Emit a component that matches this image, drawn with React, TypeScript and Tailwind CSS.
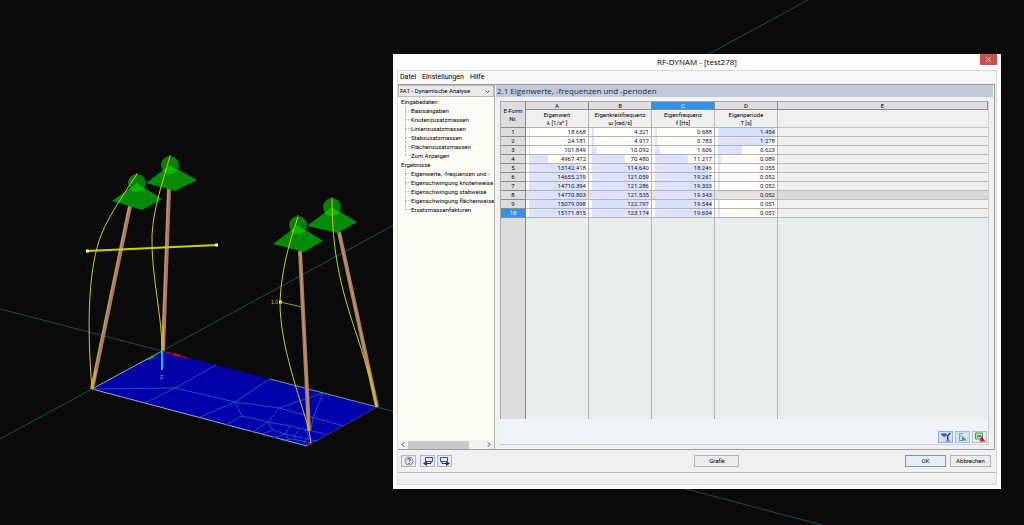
import type { ReactNode } from "react";

const inputData = [
  "Basisangaben",
  "Knotenzusatzmassen",
  "Linienzusatzmassen",
  "Stabzusatzmassen",
  "Flächenzusatzmassen",
  "Zum Anzeigen",
];

const results = [
  "Eigenwerte, -frequenzen und -",
  "Eigenschwingung knotenweise",
  "Eigenschwingung stabweise",
  "Eigenschwingung flächenweise",
  "Ersatzmassenfaktoren",
];

const columns = [
  { letter: "A", name: "Eigenwert", unit: "λ [1/s² ]" },
  { letter: "B", name: "Eigenkreisfrequenz", unit: "ω [rad/s]" },
  { letter: "C", name: "Eigenfrequenz", unit: "f [Hz]" },
  { letter: "D", name: "Eigenperiode", unit: "T [s]" },
];

const rows = [
  ["18.668", "4.321", "0.688", "1.454"],
  ["24.181", "4.917", "0.783", "1.278"],
  ["101.849", "10.092", "1.606", "0.623"],
  ["4967.472", "70.480", "11.217", "0.089"],
  ["13142.418", "114.640", "18.246", "0.055"],
  ["14655.219", "121.059", "19.267", "0.052"],
  ["14710.394", "121.286", "19.303", "0.052"],
  ["14770.803", "121.535", "19.343", "0.052"],
  ["15079.098", "122.797", "19.544", "0.051"],
  ["15171.815", "123.174", "19.604", "0.051"],
];

const maxima = columns.map((_, c) => Math.max(...rows.map((r) => Number(r[c]))));
const SELECTED_ROW = 7;
const CURSOR_ROW = 9;
const CURSOR_COLUMN = 2;

function Support({ x, y, base }: { x: number; y: number; base: string }) {
  return (
    <g>
      <circle cx={x} cy={y} r="9" fill="#087f08" />
      <polygon points={base} fill="#078a07" />
      <path d={`M${x} ${y} l-8 6 q8 6 16 0 z`} fill="#08b808" />
      <circle cx={x} cy={y - 9} r="1" fill="#c03a10" />
    </g>
  );
}

function Model() {
  return (
    <svg
      className="absolute inset-0 h-full w-full"
      viewBox="0 0 1024 525"
      preserveAspectRatio="xMinYMin slice"
      role="img"
      aria-label="Modell"
    >
      <defs>
        <linearGradient id="slab" x1="0" y1="0" x2="0" y2="1">
          <stop offset="0" stopColor="#0202a4" />
          <stop offset="1" stopColor="#0000b0" />
        </linearGradient>
      </defs>

      {/* construction axes */}
      <g stroke="#125350" strokeWidth="1">
        <path d="M0 309 L162 351" />
        <path d="M377 407 L822 525" />
        <path d="M0 439 L92 389" />
        <path d="M162 351 L808 0" />
      </g>

      {/* slab with FE mesh */}
      <polygon points="162,351 377,407 307,446 92,389" fill="url(#slab)" />
      <path d="M162 351 L92 389 L307 446" fill="none" stroke="#a9a6b8" strokeWidth="1" />
      <path d="M307 446 L377 407" fill="none" stroke="#4a2a90" strokeWidth="1" />
      <path d="M270 379 L377 407" fill="none" stroke="#7f8fb0" strokeWidth="1" />
      <g fill="none" stroke="#1557b8" strokeWidth="1">
        <path d="M92 389 L175 388 L235 402 L279 408 L344 426" />
        <path d="M216 365 L175 388 L145 403" />
        <path d="M270 379 L235 402 L200 417" />
        <path d="M235 402 L242 416 L226 425" />
        <path d="M242 416 L268 422 L279 408 L323 393 L313 418" />
        <path d="M268 422 L252 432" />
        <path d="M268 422 L290 426 L325 434" />
        <path d="M268 422 L273 430 L262 434" />
        <path d="M273 430 L285 434 L317 441" />
        <path d="M290 426 L285 434 L273 438" />
        <path d="M285 434 L289 439 L282 441" />
        <path d="M300 428 L294 437 L300 444 M305 430 L309 436 L303 445" />
        <path d="M289 439 L297 440 L312 443" />
        <path d="M313 418 L311 430" />
      </g>

      {/* columns */}
      <g strokeLinecap="butt" fill="none">
        <path d="M130 206 L92 389" stroke="#a97c60" strokeWidth="4" />
        <path d="M129 206 L91 389" stroke="#c89a7a" strokeWidth="1" />
        <path d="M169 189 L163 351" stroke="#a97c60" strokeWidth="4" />
        <path d="M168 189 L162 351" stroke="#c89a7a" strokeWidth="1" />
        <path d="M300 251 L309 431" stroke="#a97c60" strokeWidth="4" />
        <path d="M300 251 L309 431" stroke="#c89a7a" strokeWidth="1" />
        <path d="M339 232 L377 407" stroke="#a97c60" strokeWidth="4" />
        <path d="M339 232 L377 407" stroke="#c89a7a" strokeWidth="1" />
        <path d="M96 370 L92 389 M163 325 L163 350 M368 366 L377 407" stroke="#d8a43c" strokeWidth="2" />
        <path d="M309 431 L311 443" stroke="#c9b9c9" strokeWidth="1" />
        <path d="M306 445 l6 -2" stroke="#e02020" strokeWidth="1" />
      </g>

      <Support x={137} y={183} base="137,183 162,199 142,210 112,201" />
      <Support x={170} y={165} base="170,165 197,180 175,191 146,183" />
      <Support x={298} y={225} base="298,225 323,241 304,252 273,244" />
      <Support x={332} y={207} base="332,207 357,222 338,233 307,226" />

      {/* mode shape */}
      <g fill="none" stroke="#c9c935" strokeWidth="1">
        <path d="M137 174 C118 203 105 222 99 241 C88 275 87 330 92 389" />
        <path d="M170 156 C162 185 154 205 152 235 C151 275 162 315 162 350" />
        <path d="M298 217 C288 245 281 275 280 302 C280 345 299 395 309 430" />
        <path d="M332 199 C332 250 340 285 355 330 C364 356 372 385 376 406" />
      </g>
      <path d="M87 251 L217 245" stroke="#cfcf00" strokeWidth="2" />
      <path d="M86 251 h3 M215 245 h3 M279 302 h3" stroke="#ffff66" strokeWidth="3" />
      <path d="M280 302 L302 307" stroke="#9a9a2c" strokeWidth="1" />
      <text x="271" y="304" fill="#c9c935" className="font-['Liberation_Sans'] text-[5px]">1.0</text>

      {/* global axes */}
      <path d="M162 351 L147 360" stroke="#00b030" strokeWidth="1" />
      <path d="M154 356 l-5 3" stroke="#00c030" strokeWidth="2" />
      <path d="M162 351 L187 358" stroke="#d00020" strokeWidth="1" />
      <path d="M174 354 l6 2" stroke="#f00010" strokeWidth="2" />
      <path d="M162 351 V370" stroke="#19b4ee" strokeWidth="2" />
      <text x="160" y="379" fill="#29b8e8" className="font-['Liberation_Sans'] text-[6px]">Z</text>
    </svg>
  );
}

function IconButton({ label, className = "", children }: { label: string; className?: string; children: ReactNode }) {
  return (
    <button
      type="button"
      aria-label={label}
      className={`flex h-3 w-[15px] items-center justify-center border ${className || "border-[#b4b4b8] bg-[#ebebee]"}`}
    >
      <svg width="12" height="10" viewBox="0 0 12 10" fill="none">
        {children}
      </svg>
    </button>
  );
}

function TreeGroup({ title, items }: { title: string; items: string[] }) {
  return (
    <li>
      <span className="block px-[3px]">{title}</span>
      <ul className="ml-[7px]">
        {items.map((item, i) => (
          <li key={item} className="flex h-[9px] items-center">
            <span className="flex h-full w-1.5 shrink-0 flex-col">
              <span className="h-[5px] w-full border-b border-l border-dotted border-[#b5b5ac]" />
              <span className={`flex-1 border-dotted border-[#b5b5ac] ${i < items.length - 1 ? "border-l" : ""}`} />
            </span>
            <a href="#" className="whitespace-nowrap">{item}</a>
          </li>
        ))}
      </ul>
    </li>
  );
}

function Navigator() {
  return (
    <aside className="flex w-[97px] shrink-0 flex-col border-r border-[#b8b8b8] bg-[#fcfcf4]">
      <div className="relative h-3 shrink-0">
        <select
          aria-label="Fall"
          className="h-full w-full appearance-none border border-[#b9b9b9] bg-[#e9e9e9] pl-px text-[6px] leading-none text-black"
        >
          <option>FA1 - Dynamische Analyse</option>
        </select>
        <svg className="pointer-events-none absolute top-1 right-1" width="5" height="5" viewBox="0 0 5 5" fill="none" stroke="#444">
          <path d="M.5 1.500 L2.500 3.500 L4.500 1.500" />
        </svg>
      </div>
      <ul className="flex-1 overflow-hidden leading-[9px]">
        <TreeGroup title="Eingabedaten" items={inputData} />
        <TreeGroup title="Ergebnisse" items={results} />
      </ul>
      <div className="flex h-[9px] items-center bg-[#f1f1ef]">
        <button type="button" aria-label="Nach links" className="flex w-2.5 justify-center">
          <svg width="4" height="5" viewBox="0 0 4 5" fill="none" stroke="#333"><path d="M3 .5 L1 2.5 L3 4.5" /></svg>
        </button>
        <div className="h-2 w-[61px] bg-[#c9c9c9]" />
        <button type="button" aria-label="Nach rechts" className="ml-auto flex w-2.5 justify-center">
          <svg width="4" height="5" viewBox="0 0 4 5" fill="none" stroke="#333"><path d="M1 .5 L3 2.5 L1 4.5" /></svg>
        </button>
      </div>
    </aside>
  );
}

function ResultTable() {
  return (
    <table className="h-full w-full table-fixed border-separate border-spacing-0 border-t border-l border-[#a8a8a8] text-center leading-none">
      <colgroup>
        <col className="w-[25px]" />
        <col className="w-[63px]" />
        <col className="w-[63px]" />
        <col className="w-[63px]" />
        <col className="w-[63px]" />
        <col />
      </colgroup>
      <thead>
        <tr className="h-2">
          <th rowSpan={2} className="border-r border-b border-[#8a8a8a] bg-[#dcdcdc] p-0 font-normal leading-2">
            E-Form
            <br />
            Nr.
          </th>
          {columns.map((col, c) => (
            <th
              key={col.letter}
              className={`border-r border-b border-[#8a8a8a] p-0 font-normal leading-[7px] ${c === CURSOR_COLUMN ? "bg-[#3092e8] text-white" : "bg-[#dedede]"}`}
            >
              {col.letter}
            </th>
          ))}
          <th className="border-r border-b border-[#8a8a8a] bg-[#dedede] p-0 font-normal leading-[7px]">E</th>
        </tr>
        <tr className="h-[18px]">
          {columns.map((col) => (
            <th key={col.letter} className="border-r border-b border-[#b4b4b4] bg-[#efefef] p-0 font-normal leading-2">
              {col.name}
              <br />
              {col.unit}
            </th>
          ))}
          <th className="border-b border-[#c6c6c6] bg-[#efefef] p-0" />
        </tr>
      </thead>
      <tbody>
        {rows.map((row, r) => (
          <tr key={r} className="h-[9px]">
            <th
              className={`border-r border-b border-[#8a8a8a] p-0 font-normal ${r === CURSOR_ROW ? "bg-[#3092e8] text-white" : "bg-[#dcdcdc]"}`}
            >
              {r + 1}
            </th>
            {row.map((value, c) => (
              <td
                key={c}
                className={`border-r border-b border-[#b4b4b4] p-0 pr-0.5 pl-[3px] text-right text-[#14143c] ${r === SELECTED_ROW ? "bg-[#e8e2dc]" : r % 2 ? "bg-[#fffbf2]" : "bg-white"}`}
              >
                <div
                  className="h-2 bg-linear-to-r from-[#dbe2fb] to-[#dbe2fb] bg-no-repeat leading-2"
                  style={{ backgroundSize: `${Math.max(2, (Number(value) / maxima[c]) * 100)}% 100%` }}
                >
                  {value}
                </div>
              </td>
            ))}
            <td className={`border-b border-[#bcbcbc] p-0 ${r === SELECTED_ROW ? "bg-[#d9d9d9]" : "bg-[#efefef]"}`} />
          </tr>
        ))}
        <tr>
          <td className="border-r border-[#8a8a8a] bg-[#dcdcdc] p-0" />
          {columns.map((col) => (
            <td key={col.letter} className="border-r border-[#b4b4b4] bg-[#e8eced] p-0" />
          ))}
          <td className="bg-[#e8eced] p-0" />
        </tr>
      </tbody>
    </table>
  );
}

export default function App() {
  return (
    <main className="relative flex h-screen min-h-[420px] bg-[#0a0a0a] pt-[54px] pr-[23px] pb-9 pl-[393px] font-[Roboto,'Liberation_Sans',sans-serif] text-[6px] text-black">
      <Model />
      <section aria-label="RF-DYNAM" className="relative flex min-w-0 flex-1 flex-col bg-[#fdfdfd] px-1 pb-1">
        <header className="flex h-4 shrink-0 items-start">
          <span className="w-[17px]" />
          <h1 className="flex-1 text-center font-['Open_Sans',sans-serif] text-[8px] leading-4">RF-DYNAM - [test278]</h1>
          <button type="button" aria-label="Schließen" className="flex h-[11px] w-[17px] items-center justify-center bg-[#c75050]">
            <svg width="5" height="5" viewBox="0 0 5 5" stroke="#fff"><path d="M.5 .5 L4.5 4.5 M4.5 .5 L.5 4.5" /></svg>
          </button>
        </header>

        <div className="flex min-h-0 flex-1 flex-col border border-[#d9d9dc] bg-[#f0f0f0]">
          <nav className="flex h-[13px] shrink-0 items-center gap-1.5 bg-[#f6f7f9] px-0.5 text-[7px]">
            <button type="button">Datei</button>
            <button type="button">Einstellungen</button>
            <button type="button">Hilfe</button>
          </nav>

          <div className="mr-px flex min-h-0 flex-1 border-y border-r border-[#9c9c9c]">
            <Navigator />
            <div className="flex min-w-0 flex-1 flex-col pr-px pl-px">
              <h2 className="h-3 shrink-0 bg-[#bfcbd9] pl-px font-['Open_Sans',sans-serif] text-[8px] leading-3 text-[#22303e]">
                2.1 Eigenwerte, -frequenzen und -perioden
              </h2>
              <div className="m-1 flex min-h-0 flex-1 flex-col border-r border-b border-[#c9cfdb] bg-[#f0f4fa]">
                <div className="min-h-0 flex-1">
                  <ResultTable />
                </div>
                <div className="flex h-[25px] shrink-0 items-end justify-end gap-0.5 pr-px pb-px">
                  <IconButton label="Auswahl im Modell" className="border-[#8fb4dc] bg-[#cfe0f6]">
                    <path d="M1.500 2 h4.500 v2 h-3 z" fill="#5b74ad" stroke="#30457f" />
                    <path d="M10.500 1 L7.500 4 L8 8.500" stroke="#27407c" strokeWidth="1.500" />
                    <path d="M6 9 h4" stroke="#8a4b6a" />
                  </IconButton>
                  <IconButton label="Farbbalken" className="border-[#8cc2e6] bg-[#cfe6f7]">
                    <path d="M2.500 1 V9 M2 1.500 h4 M2 4 h3 M2 8.500 h4" stroke="#8a949c" />
                    <path d="M5 4 l5 4.500 h-5 z" fill="#737c84" />
                  </IconButton>
                  <IconButton label="Excel-Export" className="border-[#b9bec6] bg-[#eceef2]">
                    <path d="M1.500 1 h7 v6 h-7 z" fill="#b9e0b4" stroke="#3f9a45" />
                    <path d="M3 3.500 h4 v1.500 h-4 z" fill="#2d8a36" />
                    <path d="M7.500 4 l4 5.500 h-6 z" fill="#c0262c" />
                  </IconButton>
                </div>
              </div>
            </div>
          </div>

          <footer className="flex h-[23px] shrink-0 items-center border-b border-[#bdbdbd] pr-[5px] pl-[3px]">
            <div className="flex flex-7 gap-1">
              <IconButton label="Hilfe">
                <circle cx="6" cy="5" r="4" fill="#dfe3ee" stroke="#8d93ac" />
                <path d="M4.5 3.5 q1.5 -2 3 0 q0 1 -1.5 2 M6 7 v1" stroke="#26346e" />
              </IconButton>
              <div className="flex gap-0.5">
                <IconButton label="Vorherige Maske">
                  <path d="M3.5 1.5 h7 v4 h-7 z" fill="#dfe5f5" stroke="#3c4c86" />
                  <path d="M9 5.5 v2 h-5" stroke="#26346e" />
                  <path d="M5 5 v5 l-4 -2.500 z" fill="#26346e" />
                </IconButton>
                <IconButton label="Nächste Maske">
                  <path d="M1.500 1.500 h7 v4 h-7 z" fill="#dfe5f5" stroke="#3c4c86" />
                  <path d="M3 5.500 v2 h5" stroke="#26346e" />
                  <path d="M7 5 v5 l4 -2.500 z" fill="#26346e" />
                </IconButton>
              </div>
            </div>
            <button type="button" className="h-3 w-[45px] border border-[#b4b4b4] bg-[#ececec] leading-none">Grafik</button>
            <div className="flex flex-6 justify-end gap-1">
              <button type="button" className="h-3 w-[41px] border border-[#5e9fc4] bg-[#e6eef3] leading-none">OK</button>
              <button type="button" className="h-3 w-[41px] border border-[#b4b4b4] bg-[#ececec] leading-none">Abbrechen</button>
            </div>
          </footer>
          <div role="status" className="h-[11px] shrink-0" />
        </div>
      </section>
    </main>
  );
}
